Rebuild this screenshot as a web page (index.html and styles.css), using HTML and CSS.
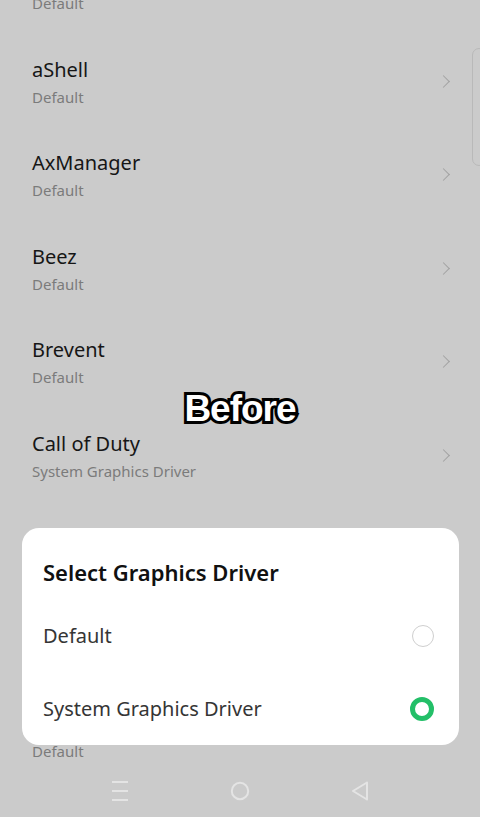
FILE: index.html
```html
<!DOCTYPE html>
<html lang="en">
<head>
    <meta charset="UTF-8">
    <meta name="viewport" content="width=device-width, initial-scale=1.0">
    <title>Graphics Driver</title>
    <link rel="stylesheet" href="styles.css">
</head>
<body>
    <div class="screen">
        <div class="list-area">
            <ul class="app-list">
                <li class="app-row">
                    <div class="app-text"><span class="app-name">Adobe Acrobat</span><span class="app-driver">Default</span></div>
                    <span class="chevron"></span>
                </li>
                <li class="app-row">
                    <div class="app-text"><span class="app-name">aShell</span><span class="app-driver">Default</span></div>
                    <span class="chevron"></span>
                </li>
                <li class="app-row">
                    <div class="app-text"><span class="app-name">AxManager</span><span class="app-driver">Default</span></div>
                    <span class="chevron"></span>
                </li>
                <li class="app-row">
                    <div class="app-text"><span class="app-name">Beez</span><span class="app-driver">Default</span></div>
                    <span class="chevron"></span>
                </li>
                <li class="app-row">
                    <div class="app-text"><span class="app-name">Brevent</span><span class="app-driver">Default</span></div>
                    <span class="chevron"></span>
                </li>
                <li class="app-row">
                    <div class="app-text"><span class="app-name">Call of Duty</span><span class="app-driver">System Graphics Driver</span></div>
                    <span class="chevron"></span>
                </li>
                <li class="app-row">
                    <div class="app-text"><span class="app-name">Chrome</span><span class="app-driver">Default</span></div>
                    <span class="chevron"></span>
                </li>
                <li class="app-row">
                    <div class="app-text"><span class="app-name">Clock</span><span class="app-driver">Default</span></div>
                    <span class="chevron"></span>
                </li>
                <li class="app-row">
                    <div class="app-text"><span class="app-name">Contacts</span><span class="app-driver">Default</span></div>
                    <span class="chevron"></span>
                </li>
            </ul>
            <div class="scrollbar"></div>
        </div>

        <nav class="nav-bar">
            <svg class="nav-icon" width="20" height="22" viewBox="0 0 20 22">
                <path d="M2 2h16M2 11h16M2 20h16" stroke="#e4e4e4" stroke-width="2" fill="none"/>
            </svg>
            <svg class="nav-icon" width="20" height="22" viewBox="0 0 20 22">
                <circle cx="10" cy="11" r="8.2" stroke="#e4e4e4" stroke-width="2" fill="none"/>
            </svg>
            <svg class="nav-icon" width="20" height="22" viewBox="0 0 20 22">
                <path d="M17 2.5L3 11l14 8.5z" stroke="#e4e4e4" stroke-width="2" stroke-linejoin="round" fill="none"/>
            </svg>
        </nav>

        <div class="caption">Before</div>

        <div class="dialog">
            <h2 class="dialog-title">Select Graphics Driver</h2>
            <div class="option">
                <span>Default</span>
                <span class="radio"></span>
            </div>
            <div class="option">
                <span>System Graphics Driver</span>
                <span class="radio checked"></span>
            </div>
        </div>
    </div>
</body>
</html>
```

FILE: styles.css
```css
body {
    margin: 0;
    font-family: 'Noto Sans', Roboto, Arial, sans-serif;
    background: #cbcbcb;
}

.screen {
    position: relative;
    width: 480px;
    height: 817px;
    overflow: hidden;
    display: flex;
    flex-direction: column;
    background: #cbcbcb;
}

.list-area {
    position: relative;
    height: 757px;
    overflow: hidden;
}

.app-list {
    list-style: none;
    margin: -59px 0 0 0;
    padding: 0;
}

.app-row {
    height: 93.5px;
    box-sizing: border-box;
    padding: 0 30px 0 32px;
    display: flex;
    align-items: center;
    justify-content: space-between;
}

.app-text {
    display: flex;
    flex-direction: column;
    gap: 3px;
    padding-top: 2px;
}

.app-name {
    font-size: 20px;
    line-height: 26px;
    color: #161616;
}

.app-driver {
    font-size: 15px;
    line-height: 22px;
    color: #7b7b7b;
}

.chevron {
    width: 8px;
    height: 8px;
    border-top: 1.5px solid #a2a2a2;
    border-right: 1.5px solid #a2a2a2;
    transform: rotate(45deg);
    margin-right: 2px;
}

.scrollbar {
    position: absolute;
    top: 48px;
    right: -6px;
    width: 12px;
    height: 116px;
    border: 1px solid #b9b9b9;
    border-radius: 7px;
}

.nav-bar {
    height: 60px;
    box-sizing: border-box;
    display: flex;
    justify-content: space-between;
    align-items: center;
    padding: 8px 110px 0 110px;
}

.caption {
    position: absolute;
    top: 388px;
    left: 0;
    right: 0;
    text-align: center;
    font-family: 'Liberation Sans', Arial, sans-serif;
    font-weight: bold;
    font-size: 37px;
    letter-spacing: -1px;
    color: #fff;
    -webkit-text-stroke: 6px #000;
    paint-order: stroke fill;
}

.dialog {
    position: absolute;
    top: 528px;
    left: 22px;
    width: 437px;
    height: 217px;
    box-sizing: border-box;
    background: #fff;
    border-radius: 17px;
    padding: 27px 25px 0 21px;
}

.dialog-title {
    margin: 0 0 28px 0;
    font-size: 22px;
    line-height: 34px;
    font-weight: 600;
    color: #111;
}

.option {
    height: 73px;
    display: flex;
    align-items: center;
    justify-content: space-between;
    font-size: 20px;
    color: #353535;
    margin-top: -18px;
    margin-bottom: 18px;
}

.radio {
    width: 20px;
    height: 20px;
    border: 1.5px solid #cfcfcf;
    border-radius: 50%;
}

.radio.checked {
    width: 14px;
    height: 14px;
    border: 5px solid #23bf68;
}
```
